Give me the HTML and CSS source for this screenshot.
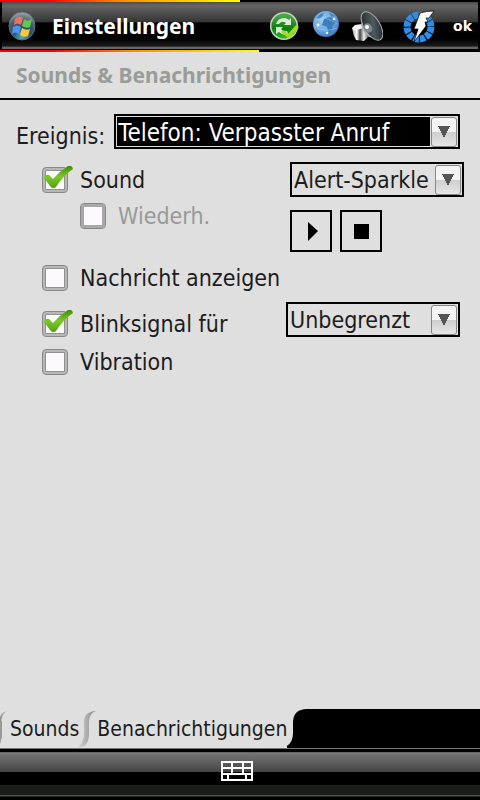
FILE: index.html
```
<!DOCTYPE html>
<html lang="de">
<head>
  <meta charset="UTF-8">
  <meta name="viewport" content="width=device-width, initial-scale=1">
  <title>Einstellungen</title>
  <link rel="stylesheet" href="styles.css">
</head>
<body>

<!-- Title bar -->
<header class="titlebar">
  <div class="rainbow"></div>
  <div class="titlebar-row">
    <button class="start-btn" type="button" aria-label="Start">
      <svg width="28" height="32" viewBox="0 0 28 32">
        <defs>
          <radialGradient id="orb" cx="50%" cy="90%" r="90%">
            <stop offset="0" stop-color="#4fb0c0"/>
            <stop offset="0.4" stop-color="#25506e"/>
            <stop offset="0.7" stop-color="#4c6070"/>
            <stop offset="1" stop-color="#a5abb0"/>
          </radialGradient>
        </defs>
        <ellipse cx="14" cy="16" rx="13" ry="14" fill="url(#orb)" stroke="#5d6d78"/>
        <path d="M7 9q4-4 8-1l-2 7q-4-3-7 0z" fill="#f0705f"/>
        <path d="M16 9q4 3 8 0l-2 8q-4 2-8-1z" fill="#62c850"/>
        <path d="M5 17q4-3 8 0l-2 7q-4-3-7 0z" fill="#4b95ee"/>
        <path d="M14 18q4 3 8 1l-2 7q-4 2-8-1z" fill="#fbc93a"/>
      </svg>
    </button>
    <h1>Einstellungen</h1>
    <div class="tray">
      <svg class="sync" width="30" height="32" viewBox="0 0 30 32">
        <defs>
          <linearGradient id="green" x2="0" y2="1">
            <stop offset="0" stop-color="#5bab52"/>
            <stop offset="0.6" stop-color="#08800c"/>
            <stop offset="1" stop-color="#2fc32c"/>
          </linearGradient>
        </defs>
        <circle cx="15" cy="16" r="13.3" fill="url(#green)" stroke="#b9d3b4" stroke-width="1.6"/>
        <path d="M7 14q2-6 8-6 3 0 5 2l2-2v7h-7l2-2q-4-3-7 1z" fill="#dcebd8"/>
        <path d="M7 17h7l-2 2q2 3 6 2l1 3q-5 2-9-2l-3 2z" fill="#dcebd8"/>
        <path d="M14 20l5 4 8-9 3 2-10 12-8-7z" fill="#a3d91e"/>
      </svg>
      <svg class="globe" width="28" height="28" viewBox="0 0 28 28">
        <defs>
          <radialGradient id="sea" cx="40%" cy="35%" r="70%">
            <stop offset="0" stop-color="#a4d0f2"/>
            <stop offset="0.6" stop-color="#68a8e2"/>
            <stop offset="1" stop-color="#3a6fb4"/>
          </radialGradient>
        </defs>
        <circle cx="14" cy="14" r="13" fill="url(#sea)"/>
        <path d="M12 9q4-3 9-1l3 5-3 2-1 6-3 2-2-6-5-2z" fill="#3d7dbd"/>
        <path d="M4 8l4-4 4-1-1 3-4 3zM17 2l6 4-4 1z" fill="#4a87c4"/>
        <path d="M3 10q10-5 22 4M3 17q10 6 22 1" fill="none" stroke="#a8d4f0" stroke-width=".5"/>
        <circle cx="6" cy="15" r="1.5" fill="#e8f7ff"/>
        <circle cx="22" cy="9" r="1.3" fill="#e8f7ff"/>
        <circle cx="15" cy="23" r="1.2" fill="#e8f7ff"/>
      </svg>
      <svg class="speaker" width="32" height="34" viewBox="0 0 32 34">
        <defs>
          <linearGradient id="cone" x2="1" y2="1">
            <stop offset="0" stop-color="#1a2023"/>
            <stop offset="0.55" stop-color="#4e595e"/>
            <stop offset="1" stop-color="#14191b"/>
          </linearGradient>
          <linearGradient id="magnet">
            <stop offset="0" stop-color="#999"/>
            <stop offset="0.3" stop-color="#fff"/>
            <stop offset="0.5" stop-color="#444"/>
            <stop offset="0.75" stop-color="#eee"/>
            <stop offset="1" stop-color="#777"/>
          </linearGradient>
        </defs>
        <path d="M1 19l10-3 6 12-4 4-8-1q-3-5-4-12z" fill="url(#magnet)"/>
        <path d="M1 19l3-3 7-1 1 4-9 3z" fill="#f5f5f5"/>
        <path d="M10 16l3-14 17 29-12-3q-6-4-8-12z" fill="#a9adaf"/>
        <ellipse cx="21" cy="17" rx="8" ry="16" transform="rotate(-32 21 17)" fill="url(#cone)" stroke="#a4aaad"/>
        <ellipse cx="17" cy="19" rx="4" ry="5" transform="rotate(-30 17 19)" fill="#7f898d"/>
        <circle cx="16" cy="18" r="2" fill="#fff"/>
      </svg>
      <svg class="power" width="34" height="34" viewBox="0 0 34 34">
        <circle cx="16" cy="18" r="12" fill="none" stroke="#2f8de8" stroke-width="7" stroke-dasharray="5.3 .98"/>
        <path d="M17 4q6-2 14-2l-5 7h-3l2 4h-3l1 4-12 16 4-13h-4z" fill="#fff" stroke="#000" stroke-width=".7"/>
      </svg>
    </div>
    <button class="ok-btn" type="button">ok</button>
  </div>
  <div class="rainbow rainbow-bottom"></div>
</header>

<h2 class="subtitle">Sounds &amp; Benachrichtigungen</h2>

<!-- Notification settings -->
<main>
  <div class="event-row">
    <label for="event">Ereignis:</label>
    <div class="select selected">
      <select id="event"><option>Telefon: Verpasster Anruf</option></select>
    </div>
  </div>

  <div class="options">
    <div class="sound-group">
      <div class="sound-checks">
        <label class="check"><input type="checkbox" checked><span>Sound</span></label>
        <label class="check sub"><input type="checkbox" disabled><span>Wiederh.</span></label>
      </div>
      <div class="sound-controls">
        <div class="select">
          <select aria-label="Sound"><option>Alert-Sparkle</option></select>
        </div>
        <div class="player">
          <button type="button" aria-label="Abspielen">
            <svg width="38" height="38" viewBox="0 0 38 38"><path d="M16 10l10 9-10 10z"/></svg>
          </button>
          <button type="button" aria-label="Stopp">
            <svg width="38" height="38" viewBox="0 0 38 38"><path d="M12 12h15v15H12z"/></svg>
          </button>
        </div>
      </div>
    </div>
    <label class="check message"><input type="checkbox"><span>Nachricht anzeigen</span></label>
    <div class="blink-row">
      <label class="check"><input type="checkbox" checked><span>Blinksignal für</span></label>
      <div class="select">
        <select aria-label="Blinkdauer"><option>Unbegrenzt</option></select>
      </div>
    </div>
    <label class="check"><input type="checkbox"><span>Vibration</span></label>
  </div>
</main>

<nav class="tabs">
  <svg width="10" height="39" viewBox="0 0 10 39">
    <defs>
      <linearGradient id="shade" x1="1" x2="0">
        <stop offset="0" stop-color="#dfdfdf"/>
        <stop offset="1" stop-color="#8a8a8a"/>
      </linearGradient>
      <linearGradient id="shade2">
        <stop offset="0" stop-color="#dfdfdf"/>
        <stop offset="1" stop-color="#858585"/>
      </linearGradient>
    </defs>
    <path d="M8 2Q1 4 1 15V26Q1 33 0 35V8Q2 2 8 2z" fill="url(#shade)"/>
    <path d="M0 12h2v16l-2 6z" fill="#999"/>
  </svg>
  <a class="tab" href="#sounds">Sounds</a>
  <svg width="18" height="39" viewBox="0 0 18 39">
    <path d="M17 2Q4 3 5 14V22Q5 36-3 38 10 40 10 24V14Q10 4 17 2z" fill="url(#shade2)"/>
  </svg>
  <a class="tab active" href="#benachrichtigungen">Benachrichtigungen</a>
  <svg width="20" height="39" viewBox="0 0 20 39">
    <path d="M20 0Q6 0 6 14V24Q6 38-8 39H20z"/>
  </svg>
  <div class="tabs-rest"></div>
</nav>

<footer class="menubar">
  <button class="keyboard-btn" type="button" aria-label="Tastatur">
    <svg width="32" height="20" viewBox="0 0 32 20">
      <path d="M1 1h30v18H1zM1 7h30M1 13h30M11 1v12M22 1v12M7 13v6M25 13v6" fill="none" stroke="#fff" stroke-width="2"/>
    </svg>
  </button>
</footer>

</body>
</html>
```
FILE: styles.css
```
* { box-sizing: border-box; }
body {
  margin: 0;
  min-height: 100vh;
  display: flex;
  flex-direction: column;
  background: #dfdfdf;
  color: #1c1c1c;
  font: 23px/32px "DejaVu Sans Condensed", Tahoma, "DejaVu Sans", sans-serif;
}
h1, h2 { margin: 0; font-family: "Noto Sans", Tahoma, sans-serif; font-weight: bold; }
button { margin: 0; padding: 0; border: 0; background: none; font: inherit; color: inherit; }
svg { display: block; flex: none; }

/* title bar */
.titlebar { background: #000; }
.rainbow {
  width: 50%;
  height: 2px;
  background: linear-gradient(to right, #f00 20%, #ff8a00 50%, #ff0);
}
.rainbow-bottom { width: 54%; }
.titlebar-row {
  display: flex;
  align-items: center;
  height: 48px;
  padding: 0 6px;
  border: solid #000;
  border-width: 0 2px 1px;
  background: linear-gradient(#4c4c4c, #666 8%, #333 43%, #000 44%, #000 78%, #1b1b1b 94%, #666 96%);
  color: #fff;
}
.start-btn { margin-right: 16px; }
h1 { flex: 1; font-size: 21px; }
.tray { display: flex; align-items: center; }
.globe { margin: 0 11px 4px 13px; }
.speaker { margin-right: 20px; }
.ok-btn { margin-left: 16px; font: bold 14px/20px "DejaVu Sans", sans-serif; }

.subtitle {
  padding: 7px 16px;
  border-bottom: 2px solid #000;
  font-size: 21px;
  color: #999c98;
}

/* form */
main { flex: 1; padding: 14px 16px; }
.event-row { display: flex; gap: 9px; margin-right: 4px; }
.event-row label { padding-top: 6px; margin-bottom: -3px; }
.event-row .select { flex: 1; height: 35px; font-size: 24px; }
.select { position: relative; border: 2px solid #000; }
.select::after {
  content: "";
  position: absolute;
  top: 1px;
  right: 1px;
  width: 24px;
  height: 28px;
  border: 1px solid #858585;
  border-radius: 3px;
  background:
    conic-gradient(from -27deg at 50% 100%, #555 54deg, transparent 0) center / 12px 12px no-repeat,
    linear-gradient(#f4f4f4 50%, #cfcfcf 51%, #e6e6e6);
  pointer-events: none;
}
select {
  display: block;
  appearance: none;
  width: 100%;
  height: 31px;
  padding: 0 27px 0 2px;
  border: 0;
  border-radius: 0;
  background: none;
  color: inherit;
  font: inherit;
}
.selected select {
  padding-left: 1px;
  border: 1px solid #dfdfdf;
  background: linear-gradient(#000, #000) left / calc(100% - 27px) no-repeat;
  color: #fff;
}

.options { padding-left: 26px; }
.sound-group { display: flex; justify-content: space-between; margin-top: 13px; }
.sound-checks { padding-top: 2px; }
.sound-controls { width: 174px; }
.player { display: flex; gap: 8px; margin-top: 13px; }
.player button { border: 2px solid #000; }
.check { display: flex; align-items: center; gap: 12px; }
.check.sub { margin: 4px 0 0 38px; color: #999; }
.message { margin-top: 10px; }
.blink-row { display: flex; align-items: flex-start; justify-content: space-between; margin: 8px 4px 6px 0; }
.blink-row .check { padding-top: 6px; }
.blink-row .select { width: 174px; }

input[type="checkbox"] {
  appearance: none;
  position: relative;
  flex: none;
  width: 26px;
  height: 26px;
  margin: 0;
  border: 1px solid #888;
  border-radius: 4px;
  background: #fcfafc;
  box-shadow: inset 0 0 0 2px #b8b8b8, inset 0 0 0 3px #909090;
}
input[type="checkbox"]:checked::after {
  content: "";
  position: absolute;
  top: -2px;
  left: 1px;
  width: 30px;
  height: 24px;
  background: linear-gradient(#3f8a0c, #7cc928 45%, #4c9c10);
  clip-path: path("M0 12Q1 8 5 9L9 13Q16 5 24 0 28-1 29 3 19 10 12 21 9 24 6 20Z");
}
input[type="checkbox"]:disabled { box-shadow: inset 0 0 0 3px #a8a8a8; }

/* tabs */
.tabs { display: flex; height: 39px; }
.tab { padding-top: 4px; color: inherit; font-size: 21px; text-decoration: none; }
.tabs-rest { flex: 1; background: #000; }

.menubar {
  display: flex;
  justify-content: center;
  align-items: flex-start;
  height: 52px;
  padding: 12px 6px 0 0;
  border-top: 1px solid #777;
  background: linear-gradient(#000 6%, #777 7%, #444 45%, #000 46%, #000 70%, #1b1d1b 71%, #1b1d1b 90%, #555 91%, #000 95%);
}
```
